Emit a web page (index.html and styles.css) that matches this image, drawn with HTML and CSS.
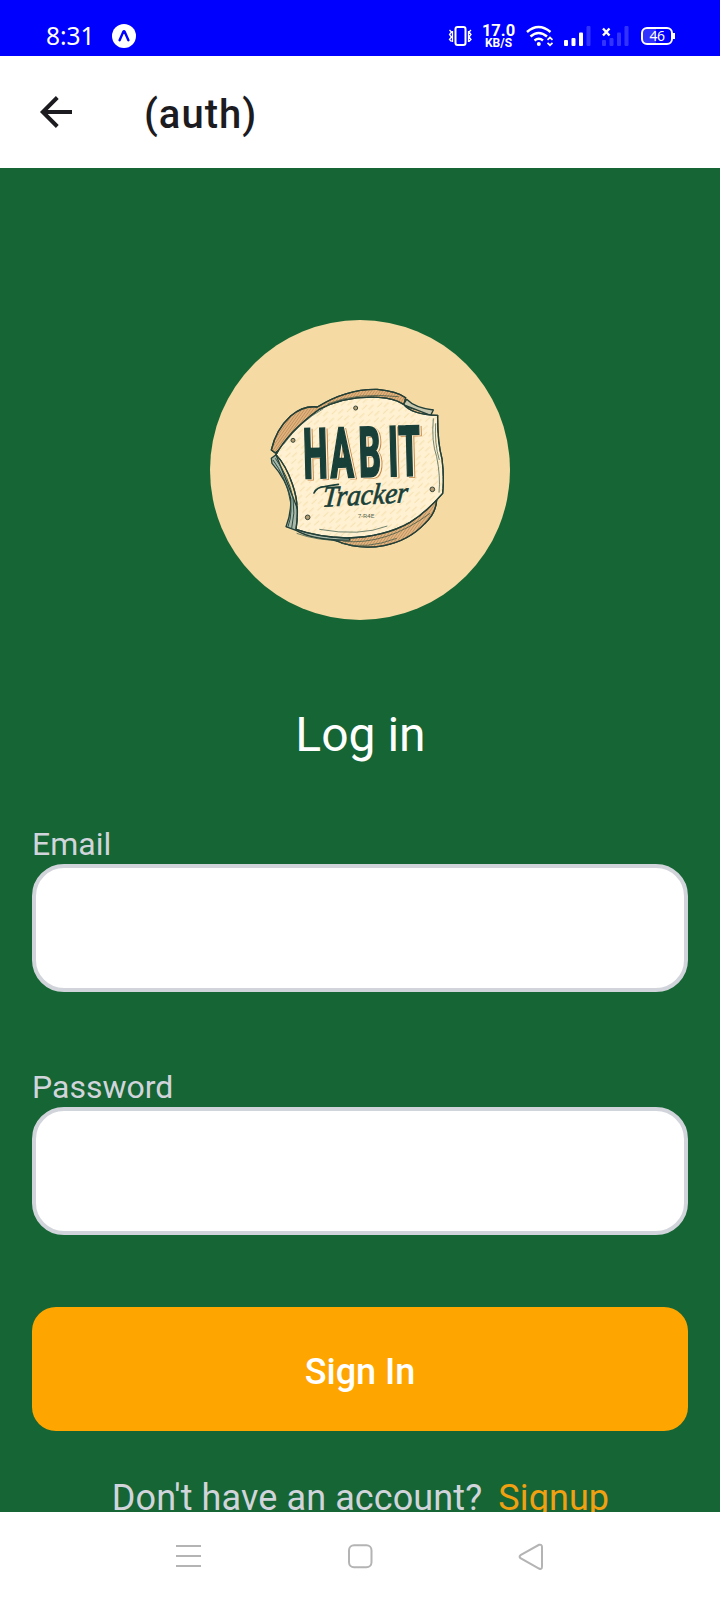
FILE: index.html
```html
<!DOCTYPE html>
<html lang="en">
<head>
<meta charset="utf-8">
<title>Log in</title>
<link rel="stylesheet" href="styles.css">
</head>
<body>
<div class="screen">
  <div class="status">
    <span class="clock">8:31</span>
    <svg class="expo" width="24" height="24" viewBox="0 0 24 24"><circle cx="12" cy="12" r="12" fill="#fff"/><path d="M7.600 16.200 11.400 7.600q.6-1 1.200 0l3.800 8.600" fill="none" stroke="#00f" stroke-width="2.400" stroke-linecap="round"/></svg>
    <svg class="vibrate" width="24" height="22" viewBox="0 0 24 22" fill="none" stroke="#fff"><rect x="6.500" y="2" width="10" height="18" rx="2" stroke-width="2"/><path d="M.5 5l2 2-2 2.500 2 2.500-2 2.500 2 2M3.500 6v11M22 5l-2 2 2 2.500-2 2.500 2 2.500-2 2M19.500 6v11" stroke-width="1.300"/></svg>
    <div class="speed"><span class="rate">17.0</span><span class="unit">KB/S</span></div>
    <svg class="wifi" width="28" height="22" viewBox="0 0 28 22" fill="none" stroke="#fff" stroke-width="2.500"><path d="M1 7q11.500-10 23.500 0M4.500 11.500q8-7 16.500 0M8.500 15.500q4.300-3.500 8.500 0"/><circle cx="12.800" cy="19" r="2" fill="#fff" stroke="none"/><path d="M21.500 14.800 24 12.500l2.500 2.300M21.500 17.800 24 20.200l2.500-2.400" stroke-width="1.700"/></svg>
    <svg class="signal" width="27" height="20" viewBox="0 0 27 20" fill="#fff"><rect x="0" y="14" width="4" height="6" rx="1"/><rect x="7.500" y="12" width="4" height="8" rx="1"/><rect x="15" y="6.500" width="4" height="13.500" rx="1"/><rect x="22.500" y="0" width="4" height="20" rx="1" opacity=".2"/></svg>
    <svg class="signal-off" width="27" height="20" viewBox="0 0 27 20" fill="#fff"><g opacity=".2"><rect x="0" y="14" width="4" height="6" rx="1"/><rect x="7.500" y="12" width="4" height="8" rx="1"/><rect x="15" y="6.500" width="4" height="13.500" rx="1"/><rect x="22.500" y="0" width="4" height="20" rx="1"/></g><path d="m1 2.500 6.500 7m0-7-6.500 7" stroke="#fff" stroke-width="2.400"/></svg>
    <div class="battery"><span>46</span></div>
  </div>

  <header class="header">
    <svg width="32" height="32" viewBox="0 0 32 32" fill="none" stroke="#1c1b1f" stroke-width="4"><path d="M32 16H3M17.300 1.500 2.800 16l14.500 14.500"/></svg>
    <h1 class="header-title">(auth)</h1>
  </header>

  <main class="content">
    <svg class="logo" width="300" height="300" viewBox="30 30 900 900">
      <defs>
        <pattern id="grain" width="38" height="26" patternUnits="userSpaceOnUse" patternTransform="rotate(-43)"><path d="M0 4h20M15 17h20" stroke="#f3dca6" stroke-width="2.500"/></pattern>
        <pattern id="hatch" width="7" height="7" patternUnits="userSpaceOnUse" patternTransform="rotate(35)"><path d="M0 0v7" stroke="#a7713c" stroke-width="2.500"/></pattern>
      </defs>
      <circle cx="480" cy="480" r="450" fill="#f5daa4"/>
      <g stroke="#223f38" stroke-width="4" stroke-linejoin="round">
        <path d="M226 429 214 420Q228 358 272 318 310 286 352 291 440 236 532 238 590 243 617 263L612 284Q635 302 698 300L692 314 360 320Z" fill="#dfb27d"/>
        <path d="M226 429 214 420Q228 358 272 318 310 286 352 291 440 236 532 238 590 243 617 263L612 284 360 320Z" fill="url(#hatch)"/>
        <path d="M610 284 620 268Q645 294 700 300L692 316Z" fill="#c8c7ad"/>
        <path d="M710 570Q708 610 674 641C610 710 500 730 410 693L260 650 480 600Z" fill="#e0b582"/>
        <path d="M710 570Q708 610 674 641C610 710 500 730 410 693Z" fill="url(#hatch)"/>
        <path d="M228 434 214 445 216 460Q260 510 272 566 274 610 258 650L290 662Q340 692 450 690L440 672 310 640Z" fill="#a9b8a8"/>
        <path d="M228 434Q265 365 356 299 435 257 535 262 584 265 611 283 635 314 713 316 712 395 726 447 733 500 728 550 679 607 630 637 553 681 440 684 350 680 288 658 300 585 277 522 258 466 228 434Z" fill="#fff1d1"/>
        <path d="M228 434Q265 365 356 299 435 257 535 262 584 265 611 283 635 314 713 316 712 395 726 447 733 500 728 550 679 607 630 637 553 681 440 684 350 680 288 658 300 585 277 522 258 466 228 434Z" fill="url(#grain)"/>
      </g>
      <g fill="none" stroke="#294d43" stroke-width="3">
        <path d="M219 450Q255 500 266 550 281 605 264 650M226 445Q266 500 279 563 286 610 275 655"/>
        <path d="M700 325Q694 395 710 440 722 500 717 548M707 340Q703 400 718 450" stroke-width="2"/>
        <path d="M358 658Q480 680 562 648M290 670Q350 692 430 692M422 700Q500 719 590 685M430 694Q560 706 690 610M250 404Q300 335 370 296M382 282Q470 246 596 260" stroke-width="2"/>
      </g>
      <g fill="#b29c73" stroke="#394638" stroke-width="3"><circle cx="467" cy="294" r="6"/><circle cx="279" cy="391" r="6"/><circle cx="697" cy="538" r="7"/><circle cx="323" cy="622" r="7"/></g>
      <g class="habit" transform="rotate(-1.500 490 425)">
        <g transform="translate(7 4)" fill="#c68749" stroke="#c68749"><text transform="translate(309 500) scale(.5 1)" x="0 162 334 511 573">HABIT</text></g>
        <g transform="translate(4 2)" fill="#fff1d1" stroke="#fff1d1"><text transform="translate(309 500) scale(.5 1)" x="0 162 334 511 573">HABIT</text></g>
        <g fill="#193f39" stroke="#193f39"><text transform="translate(309 500) scale(.5 1)" x="0 162 334 511 573">HABIT</text></g>
      </g>
      <path d="M342 549Q350 531 374 530 396 525 415 523" fill="none" stroke="#193f39" stroke-width="5" stroke-linecap="round"/>
      <text class="tracker" transform="translate(366 590) rotate(-3) skewX(-8)" textLength="256" lengthAdjust="spacingAndGlyphs">Tracker</text>
      <text class="tiny" x="473" y="623" textLength="50" lengthAdjust="spacingAndGlyphs">7-R4E</text>
    </svg>

    <h2 class="title">Log in</h2>
    <form class="form">
      <label class="label" for="email">Email</label>
      <input class="input" id="email" type="email">
      <label class="label label-password" for="password">Password</label>
      <input class="input" id="password" type="password">
      <button class="submit" type="button">Sign In</button>
    </form>
    <p class="signup"><span>Don't have an account?</span><a>Signup</a></p>
  </main>

  <nav class="nav">
    <svg width="26" height="26" viewBox="0 0 26 26" stroke="#b4b4b4" stroke-width="2"><path d="M0 2h25M0 12h25M0 22h25"/></svg>
    <svg width="26" height="26" viewBox="0 0 26 26" fill="none" stroke="#b4b4b4" stroke-width="2"><rect x="1" y="1.200" width="22.500" height="22" rx="5"/></svg>
    <svg width="26" height="26" viewBox="0 0 26 26" fill="none" stroke="#b4b4b4" stroke-width="2"><path d="M1.500 11.200 20 .8Q23 0 23 3V22.500Q23 26 20 24.500L1.500 14.200Q-.3 12.700 1.500 11.200Z"/></svg>
  </nav>
</div>
</body>
</html>
```

FILE: styles.css
```css
* { box-sizing: border-box; }
body { margin: 0; font-family: Roboto, "Liberation Sans", sans-serif; }
h1, h2, p { margin: 0; font-weight: 400; }
svg { display: block; flex: none; overflow: visible; }

.screen {
  width: 720px;
  height: 1600px;
  display: flex;
  flex-direction: column;
  overflow: hidden;
  background: #166534;
}

.status {
  height: 56px;
  flex: none;
  display: flex;
  align-items: center;
  padding: 16px 46px 0;
  background: #00f;
  color: #fff;
}
.clock { width: 66px; padding-bottom: 1px; font: 24.5px/30px "Noto Sans", sans-serif; white-space: nowrap; }
.expo { margin-right: 313px; }
.speed {
  width: 33px;
  margin-left: 9px;
  display: flex;
  flex-direction: column;
  align-items: center;
  font-weight: 700;
}
.rate { font-size: 16.5px; line-height: 13px; }
.unit { font-size: 12px; line-height: 12px; }
.wifi { margin-left: 11px; }
.signal { margin-left: 10px; }
.signal-off { margin-left: 11px; }
.battery {
  position: relative;
  width: 32px;
  height: 18px;
  margin-left: 12px;
  border: 2px solid #fff;
  border-radius: 6px;
  background: linear-gradient(90deg, #33f 46%, transparent 46%);
  font: 14px/14px "Noto Sans", sans-serif;
  letter-spacing: -0.5px;
  text-align: center;
}
.battery::after {
  content: "";
  position: absolute;
  right: -4px;
  top: 4px;
  width: 2px;
  height: 6px;
  background: #fff;
}

.header {
  height: 112px;
  flex: none;
  display: flex;
  align-items: center;
  gap: 72px;
  padding-left: 40px;
  background: #fff;
}
.header-title {
  padding-top: 6px;
  color: #1c1b1f;
  font-size: 40px;
  font-weight: 500;
  line-height: 48px;
  letter-spacing: 1px;
}

.content {
  height: 1344px;
  flex: none;
  display: flex;
  flex-direction: column;
  align-items: center;
  padding: 152px 32px 0;
  overflow: hidden;
}
.habit text {
  font: 700 208px Roboto, sans-serif;
  stroke-width: 7px;
  fill: inherit;
  stroke: inherit;
}
.tracker { font: italic 400 88px "Liberation Serif", serif; fill: #193f39; stroke: #193f39; stroke-width: 2px; }
.tiny { font: 16px Roboto, sans-serif; fill: #5b6a55; }

.title { margin-top: 83px; padding-left: 1px; color: #fff; font-size: 48px; line-height: 64px; }
.form { width: 100%; display: flex; flex-direction: column; margin-top: 55px; }
.label { height: 42px; color: #d1d5db; font-size: 32px; line-height: 44px; }
.label-password { margin-top: 73px; }
.input {
  width: 100%;
  height: 128px;
  border: 4px solid #d1d5db;
  border-radius: 32px;
  padding: 0 28px;
  background: #fff;
  font: 32px Roboto, sans-serif;
}
.submit {
  height: 124px;
  margin-top: 72px;
  border: 0;
  border-radius: 24px;
  background: #ffa500;
  color: #fff;
  font: 500 36px Roboto, sans-serif;
  padding: 6px 0 0;
}
.signup {
  display: flex;
  gap: 16px;
  margin-top: 39px;
  padding-left: 1px;
  color: #d1d5db;
  font-size: 36px;
  line-height: 56px;
  letter-spacing: 0.1px;
  white-space: nowrap;
}
.signup a { color: #f0a010; }

.nav {
  height: 88px;
  flex: none;
  display: flex;
  justify-content: space-between;
  align-items: center;
  padding: 2px 175px 0 176px;
  background: #fff;
}
```
